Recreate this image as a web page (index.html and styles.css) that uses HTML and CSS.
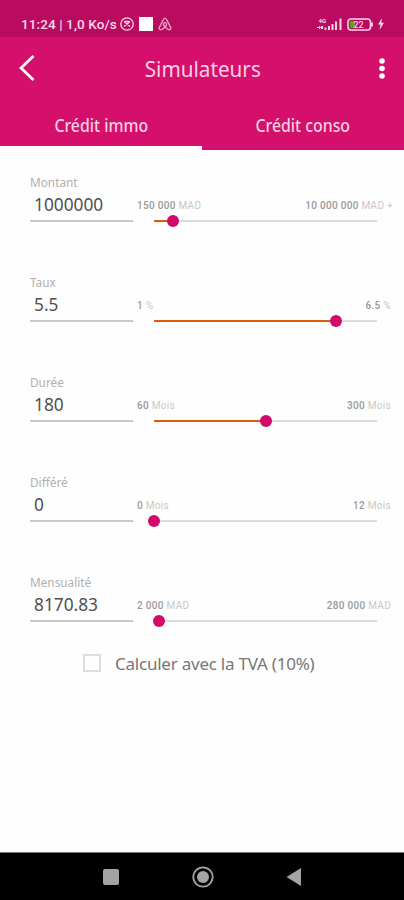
FILE: index.html
```html
<!DOCTYPE html>
<html lang="fr">
<head>
  <meta charset="UTF-8">
  <meta name="viewport" content="width=device-width, initial-scale=1.0">
  <title>Simulateurs</title>
  <link rel="stylesheet" href="styles.css">
</head>
<body>
  <div class="status-bar">
    <div class="status-left">
      <span class="status-time">11:24 | 1,0 Ko/s</span>
      <svg class="icon-mute" width="14" height="14" viewBox="0 0 14 14" fill="none" stroke="#fbd3e5" stroke-width="1.3">
        <circle cx="7" cy="7" r="6.2"/>
        <path d="M4 4.500l6 5M10 4.500l-6 5M4.500 4.500h5"/>
      </svg>
      <span class="status-square"></span>
      <svg width="14" height="14" viewBox="0 0 14 14" fill="none" stroke="#f3a9cb" stroke-width="1.3">
        <path d="M7 1.2c-1 0-1.400.9-2 2.200L1.300 10.400c-.8 2 1.600 3.100 3.300 1.700C6 11 8.700 8.600 8.500 7c-.2-1.900-2.800-1.900-3 0-.2 1.600 2.500 4 3.900 5.100 1.700 1.400 4.100.3 3.300-1.700L9 3.400C8.400 2.100 8 1.200 7 1.200z"/>
      </svg>
    </div>
    <div class="status-right">
      <svg width="26" height="15" viewBox="0 0 26 15">
        <text class="network" x="1.500" y="6">4G</text>
        <g fill="#fbd3e5">
          <path d="M0 10h2v-1.500l2 2-2 2V11H0zM4 9h2v3H4z"/>
          <path d="M7.500 10.500h2V13h-2zM11 9h2v4h-2zM14.500 7h2v6h-2zM18 4.500h2V13h-2zM22.500 1.500h2V13h-2z"/>
        </g>
      </svg>
      <svg width="27" height="13" viewBox="0 0 27 13">
        <rect x="1" y="1" width="22.500" height="11" rx="3" fill="none" stroke="#fbd3e5" stroke-width="1.600"/>
        <path d="M25 4.500v4" stroke="#fbd3e5" stroke-width="1.800"/>
        <path d="M3 3h5v7H3z" fill="#58a618"/>
        <text class="battery" x="6.500" y="9.800">22</text>
      </svg>
      <svg width="6" height="12" viewBox="0 0 6 12">
        <path d="M4 0L0 6.500h2.500L1.500 12 6 4.800H3.300z" fill="#fbd3e5"/>
      </svg>
    </div>
  </div>

  <header>
    <div class="toolbar">
      <svg class="back" width="16" height="26" viewBox="0 0 16 26" fill="none" stroke="#fff" stroke-width="2.700">
        <path d="M14.500 1L2 13l12.500 12"/>
      </svg>
      <h1>Simulateurs</h1>
      <svg class="more" width="6" height="21" viewBox="0 0 6 21" fill="#fff">
        <circle cx="3" cy="3" r="2.800"/>
        <circle cx="3" cy="10.500" r="2.800"/>
        <circle cx="3" cy="18" r="2.800"/>
      </svg>
    </div>
    <nav class="tabs">
      <div class="tab active"><span>Crédit immo</span></div>
      <div class="tab"><span>Crédit conso</span></div>
    </nav>
  </header>

  <main>
    <div class="row">
      <div class="field">
        <label>Montant</label>
        <div class="value">1000000</div>
      </div>
      <div class="range">
        <div class="limits overflow"><span><b>150 000</b> MAD</span><span><b>10 000 000</b> MAD +</span></div>
        <div class="track"><div class="fill" style="width: 8.5%"></div><div class="thumb"></div></div>
      </div>
    </div>
    <div class="row">
      <div class="field">
        <label>Taux</label>
        <div class="value">5.5</div>
      </div>
      <div class="range">
        <div class="limits"><span><b>1</b> %</span><span><b>6.5</b> %</span></div>
        <div class="track"><div class="fill" style="width: 81.8%"></div><div class="thumb"></div></div>
      </div>
    </div>
    <div class="row">
      <div class="field">
        <label>Durée</label>
        <div class="value">180</div>
      </div>
      <div class="range">
        <div class="limits"><span><b>60</b> Mois</span><span><b>300</b> Mois</span></div>
        <div class="track"><div class="fill" style="width: 50%"></div><div class="thumb"></div></div>
      </div>
    </div>
    <div class="row">
      <div class="field">
        <label>Différé</label>
        <div class="value">0</div>
      </div>
      <div class="range">
        <div class="limits"><span><b>0</b> Mois</span><span><b>12</b> Mois</span></div>
        <div class="track"><div class="fill" style="width: 0%"></div><div class="thumb"></div></div>
      </div>
    </div>
    <div class="row">
      <div class="field">
        <label>Mensualité</label>
        <div class="value">8170.83</div>
      </div>
      <div class="range">
        <div class="limits"><span><b>2 000</b> MAD</span><span><b>280 000</b> MAD</span></div>
        <div class="track"><div class="fill" style="width: 2.2%"></div><div class="thumb"></div></div>
      </div>
    </div>
    <div class="tva">
      <span class="checkbox"></span>
      <span class="tva-label">Calculer avec la TVA (10%)</span>
    </div>
  </main>

  <footer>
    <svg width="16" height="16" viewBox="0 0 16 16"><rect width="16" height="16" rx="2" fill="#a3a3a3"/></svg>
    <svg width="22" height="22" viewBox="0 0 22 22">
      <circle cx="11" cy="11" r="9.700" fill="none" stroke="#a3a3a3" stroke-width="1.800"/>
      <circle cx="11" cy="11" r="6" fill="#a3a3a3"/>
    </svg>
    <svg width="16" height="18" viewBox="0 0 16 18"><path d="M15 0v18L.5 9z" fill="#a3a3a3"/></svg>
  </footer>
</body>
</html>
```
FILE: styles.css
```css
* {
  box-sizing: border-box;
}

body {
  margin: 0;
  height: 900px;
  display: flex;
  flex-direction: column;
  background: #fefefe;
  font-family: "Noto Sans", sans-serif;
  overflow: hidden;
}

.status-bar {
  height: 37px;
  padding: 11px 20px 0 21px;
  display: flex;
  justify-content: space-between;
  background: #b90c60;
}

.status-left,
.status-right {
  display: flex;
  align-items: center;
  height: 26px;
}

.status-left {
  gap: 5px;
}

.status-right {
  gap: 4px;
}

.status-time {
  width: 94px;
  font-family: Roboto, sans-serif;
  font-size: 13.5px;
  font-weight: 500;
  letter-spacing: 0.1px;
  color: #fbd9e8;
  white-space: nowrap;
}

.status-square {
  width: 14px;
  height: 14px;
  background: #fff;
}

.network {
  font: 700 6px Roboto, sans-serif;
  fill: #fbd3e5;
}

.battery {
  font: 500 9px Roboto, sans-serif;
  fill: #fbd3e5;
}

header {
  height: 113px;
  background: #d4106c;
  color: #fbcfe2;
}

.toolbar {
  height: 62px;
  padding: 0 19px;
  display: flex;
  align-items: center;
  justify-content: space-between;
}

h1 {
  margin: 0 9px 0 0;
  font-size: 22px;
  font-weight: 400;
  transform: scaleX(0.94);
}

.tabs {
  display: flex;
  height: 51px;
}

.tab {
  flex: 1;
  display: flex;
  align-items: center;
  justify-content: center;
  font-size: 18px;
  font-weight: 500;
}

.tab span {
  transform: scaleX(0.88);
}

.active {
  border-bottom: 4px solid #fff;
  padding-top: 4px;
}

main {
  flex: 1;
  padding: 22px 12px 0 30px;
}

.row {
  display: flex;
  gap: 4px;
  height: 100px;
}

.field {
  width: 103px;
  height: 50px;
  border-bottom: 2px solid #c9c9c9;
}

label {
  display: block;
  height: 21px;
  line-height: 21px;
  font-size: 11.8px;
  color: #b0b0b0;
}

.value {
  padding-left: 4px;
  line-height: 23px;
  font-size: 17.3px;
  color: #505050;
}

.range {
  flex: 1;
}

.limits {
  display: flex;
  justify-content: space-between;
  padding: 27px 1px 0 0;
  height: 48px;
  font-family: Roboto, sans-serif;
  font-size: 10px;
  line-height: 13px;
  letter-spacing: 0.3px;
  color: #c8c8c8;
  white-space: nowrap;
}

.limits b {
  font-weight: 500;
  color: #999;
}

.overflow {
  padding-right: 0;
  margin-right: -1px;
}

.track {
  display: flex;
  align-items: center;
  height: 2px;
  margin: 0 15px 0 17px;
  background: #dcdcdc;
}

.fill {
  height: 2px;
  background: #dc5c12;
}

.thumb {
  flex: none;
  width: 12px;
  height: 12px;
  margin-left: -6px;
  border-radius: 50%;
  background: #d20b6b;
}

.tva {
  display: flex;
  align-items: center;
  gap: 14px;
  height: 24px;
  margin-top: -21px;
  padding-left: 53px;
}

.checkbox {
  width: 18px;
  height: 18px;
  border: 2px solid #dedede;
}

.tva-label {
  font-size: 17px;
  letter-spacing: -0.23px;
  color: #777;
  white-space: nowrap;
}

footer {
  height: 48px;
  padding: 0 102px 0 103px;
  display: flex;
  align-items: center;
  justify-content: space-between;
  border-top: 1px solid #777;
  background: #000;
}
```
